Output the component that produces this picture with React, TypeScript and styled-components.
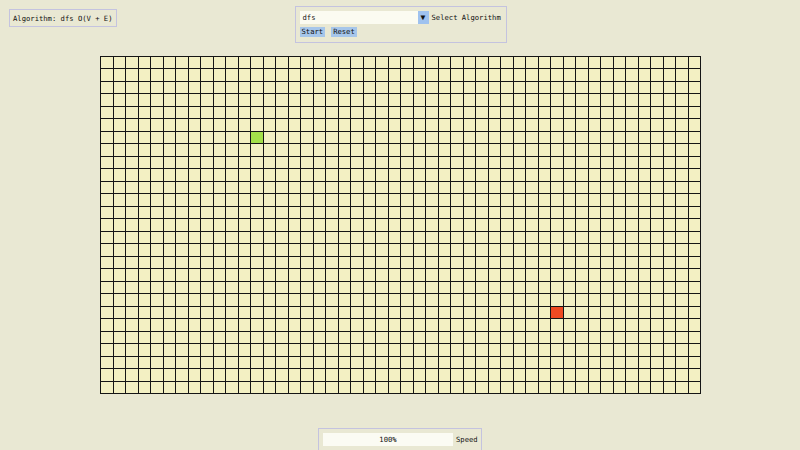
import styled, { createGlobalStyle } from "styled-components"

const COLS = 48
const ROWS = 27
const START = { row: 6, col: 12 }
const END = { row: 20, col: 36 }

const GlobalStyle = createGlobalStyle`
    html, body {
        margin: 0;
        padding: 0;
        background: #e9e8d3;
    }
    * {
        box-sizing: border-box;
    }
`

const Page = styled.div`
    width: 800px;
    height: 450px;
    overflow: hidden;
    display: flex;
    flex-direction: column;
    font-family: "DejaVu Sans Mono", "Liberation Mono", monospace;
    font-size: 7.2px;
    color: #111;
    & > * {
        flex-shrink: 0;
    }
`
const Header = styled.div`
    display: grid;
    grid-template-columns: 1fr auto 1fr;
    align-items: start;
    padding: 6px 8px 0 9px;
`
const InfoBox = styled.div`
    justify-self: start;
    margin-top: 3px;
    width: 108px;
    height: 18px;
    padding: 0 3px;
    display: flex;
    align-items: center;
    border: 1px solid #c4c3df;
    white-space: nowrap;
`
const Controls = styled.div`
    width: 212px;
    height: 37px;
    padding: 4px 4px 0 4px;
    border: 1px solid #c4c3df;
    display: flex;
    flex-direction: column;
    gap: 3px;
`
const SelectRow = styled.div`
    display: flex;
    align-items: center;
    height: 13px;
`
const SelectField = styled.div`
    width: 118px;
    height: 13px;
    padding-left: 3px;
    display: flex;
    align-items: center;
    background: #fbfbf1;
`
const SelectArrow = styled.div`
    width: 11px;
    height: 13px;
    background: #9fc2ef;
    display: flex;
    align-items: center;
    justify-content: center;
    font-size: 8px;
    color: #111;
`
const SelectLabel = styled.span`
    margin-left: 3px;
    white-space: nowrap;
`
const ButtonRow = styled.div`
    display: flex;
    gap: 6px;
`
const Button = styled.button`
    font: inherit;
    color: #111;
    height: 10px;
    padding: 0 2px;
    border: none;
    background: #a6c6ea;
    display: flex;
    align-items: center;
    line-height: 1;
`
const Board = styled.div`
    margin: 13px 0 0 100px;
    width: 601px;
    height: 338px;
    padding: 1px;
    background: #151515;
    display: grid;
    grid-template-columns: repeat(${COLS}, 1fr);
    grid-template-rows: repeat(${ROWS}, 1fr);
    gap: 1px;
`
const Cell = styled.div<{ $kind: "empty" | "start" | "end" }>`
    background: ${p => p.$kind === "start" ? "#a3e04a" : p.$kind === "end" ? "#f04a22" : "#f3f0c3"};
`
const Footer = styled.div`
    margin: 34px 0 0 318px;
    width: 164px;
    height: 30px;
    padding: 4px 3px 0 4px;
    border: 1px solid #c4c3df;
    display: flex;
    align-items: flex-start;
    gap: 3px;
`
const SpeedBar = styled.div`
    width: 130px;
    height: 13px;
    background: #fbfbf3;
    display: flex;
    align-items: center;
    justify-content: center;
`
const SpeedLabel = styled.span`
    height: 13px;
    display: flex;
    align-items: center;
`

function App() {
    const cells = []
    for (let r = 0; r < ROWS; r++) {
        for (let c = 0; c < COLS; c++) {
            let kind: "empty" | "start" | "end" = "empty"
            if (r === START.row && c === START.col) kind = "start"
            if (r === END.row && c === END.col) kind = "end"
            cells.push(<Cell key={r + "-" + c} $kind={kind} />)
        }
    }
    return (
        <Page>
            <GlobalStyle />
            <Header>
                <InfoBox>Algorithm: dfs O(V + E)</InfoBox>
                <Controls>
                    <SelectRow>
                        <SelectField>dfs</SelectField>
                        <SelectArrow>▼</SelectArrow>
                        <SelectLabel>Select Algorithm</SelectLabel>
                    </SelectRow>
                    <ButtonRow>
                        <Button>Start</Button>
                        <Button>Reset</Button>
                    </ButtonRow>
                </Controls>
                <div />
            </Header>
            <Board>{cells}</Board>
            <Footer>
                <SpeedBar>100%</SpeedBar>
                <SpeedLabel>Speed</SpeedLabel>
            </Footer>
        </Page>
    )
}

export default App
